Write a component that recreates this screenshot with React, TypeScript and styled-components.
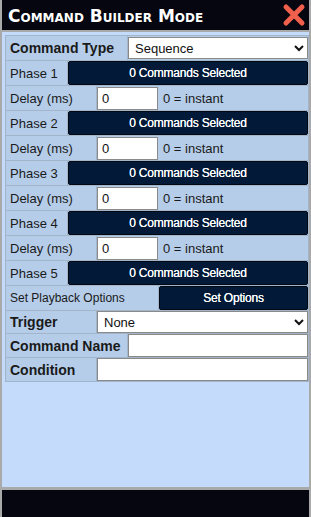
import React from "react";
import styled, { createGlobalStyle } from "styled-components";

const GlobalStyle = createGlobalStyle`
  html, body {
    margin: 0;
    padding: 0;
    background: #a9a9a9;
  }
  * {
    box-sizing: border-box;
  }
`;

const Frame = styled.div`
  width: 311px;
  height: 517px;
  display: flex;
  flex-direction: column;
  padding: 0 2px;
  background: #a9a9a9;
  font-family: "Liberation Sans", Arial, sans-serif;
`;

const Header = styled.div`
  height: 30px;
  flex: none;
  background: #05060f;
  display: flex;
  align-items: center;
  justify-content: space-between;
  padding: 0 3px 0 6px;
`;

const Title = styled.div`
  color: #ffffff;
  font-family: "DejaVu Sans", Verdana, sans-serif;
  font-weight: 700;
  font-size: 17px;
  font-variant: small-caps;
  margin-top: 1px;
`;

const CloseButton = styled.button`
  border: 0;
  background: none;
  padding: 0;
  width: 24px;
  height: 24px;
  display: flex;
  align-items: center;
  justify-content: center;
  cursor: pointer;
`;

const Body = styled.div`
  flex: 1;
  margin-top: 2px;
  background: #c5dbfb;
  padding: 3px 0 0 3px;
`;

const Table = styled.div`
  display: flex;
  flex-direction: column;
  gap: 1px;
  background: #a3b5ca;
  border: 1px solid #a3b5ca;
`;

const Row = styled.div<{ $height?: number }>`
  display: flex;
  height: ${(p) => p.$height ?? 24}px;
  gap: 1px;
`;

const Label = styled.div<{ $width: number; $bold?: boolean; $small?: boolean }>`
  width: ${(p) => p.$width}px;
  flex: none;
  background: #b5cde9;
  display: flex;
  align-items: center;
  padding-left: 4px;
  color: #1a1a1a;
  font-size: ${(p) => (p.$bold ? "14px" : p.$small ? "12px" : "13px")};
  font-weight: ${(p) => (p.$bold ? 700 : 400)};
  white-space: nowrap;
`;

const Cell = styled.div`
  flex: 1;
  background: #b5cde9;
  display: flex;
  align-items: center;
  min-width: 0;
`;

const Select = styled.select`
  width: 100%;
  height: 22px;
  border: 1px solid #8a8a8a;
  border-radius: 0;
  background: #ffffff;
  font-family: "Liberation Sans", Arial, sans-serif;
  font-size: 13px;
  color: #111;
  padding: 0 2px;
`;

const TextInput = styled.input<{ $width?: number }>`
  width: ${(p) => (p.$width ? `${p.$width}px` : "100%")};
  flex: none;
  height: 100%;
  max-height: 23px;
  border: 1px solid #8a8a8a;
  border-radius: 0;
  background: #ffffff;
  font-family: "Liberation Sans", Arial, sans-serif;
  font-size: 13px;
  color: #111;
  padding: 0 4px;
  outline: none;
`;

const Hint = styled.span`
  font-size: 13px;
  color: #1a1a1a;
  margin-left: 5px;
`;

const DarkButton = styled.button`
  width: 100%;
  height: 100%;
  border: 1px solid #000814;
  border-radius: 2px;
  background: #021a37;
  color: #ffffff;
  font-family: "Liberation Sans", Arial, sans-serif;
  font-size: 12px;
  letter-spacing: -0.2px;
  text-shadow: 0 0 0.4px #ffffff;
  cursor: pointer;
`;

const Footer = styled.div`
  height: 27px;
  flex: none;
  margin-top: 3px;
  background: #05060f;
`;

const CloseIcon = () => (
  <svg width="24" height="24" viewBox="0 0 24 24">
    <path
      d="M4 4 L20 20 M20 4 L4 20"
      stroke="#f0604c"
      strokeWidth="5"
      strokeLinecap="round"
    />
  </svg>
);

const phases = [1, 2, 3, 4, 5];

const App: React.FC = () => {
  return (
    <>
      <GlobalStyle />
      <Frame>
        <Header>
          <Title>Command Builder Mode</Title>
          <CloseButton aria-label="Close">
            <CloseIcon />
          </CloseButton>
        </Header>
        <Body>
          <Table>
            <Row>
              <Label $width={121} $bold>
                Command Type
              </Label>
              <Cell>
                <Select defaultValue="Sequence">
                  <option>Sequence</option>
                  <option>Single</option>
                </Select>
              </Cell>
            </Row>
            {phases.map((n) => (
              <React.Fragment key={n}>
                <Row>
                  <Label $width={61}>Phase {n}</Label>
                  <Cell>
                    <DarkButton>0 Commands Selected</DarkButton>
                  </Cell>
                </Row>
                {n < 5 && (
                  <Row>
                    <Label $width={90}>Delay (ms)</Label>
                    <Cell>
                      <TextInput $width={61} defaultValue="0" />
                      <Hint>0 = instant</Hint>
                    </Cell>
                  </Row>
                )}
              </React.Fragment>
            ))}
            <Row>
              <Label $width={152} $small>
                Set Playback Options
              </Label>
              <Cell>
                <DarkButton>Set Options</DarkButton>
              </Cell>
            </Row>
            <Row $height={22}>
              <Label $width={90} $bold>
                Trigger
              </Label>
              <Cell>
                <Select defaultValue="None">
                  <option>None</option>
                </Select>
              </Cell>
            </Row>
            <Row $height={23}>
              <Label $width={121} $bold>
                Command Name
              </Label>
              <Cell>
                <TextInput />
              </Cell>
            </Row>
            <Row $height={23}>
              <Label $width={90} $bold>
                Condition
              </Label>
              <Cell>
                <TextInput />
              </Cell>
            </Row>
          </Table>
        </Body>
        <Footer />
      </Frame>
    </>
  );
};

export default App;
